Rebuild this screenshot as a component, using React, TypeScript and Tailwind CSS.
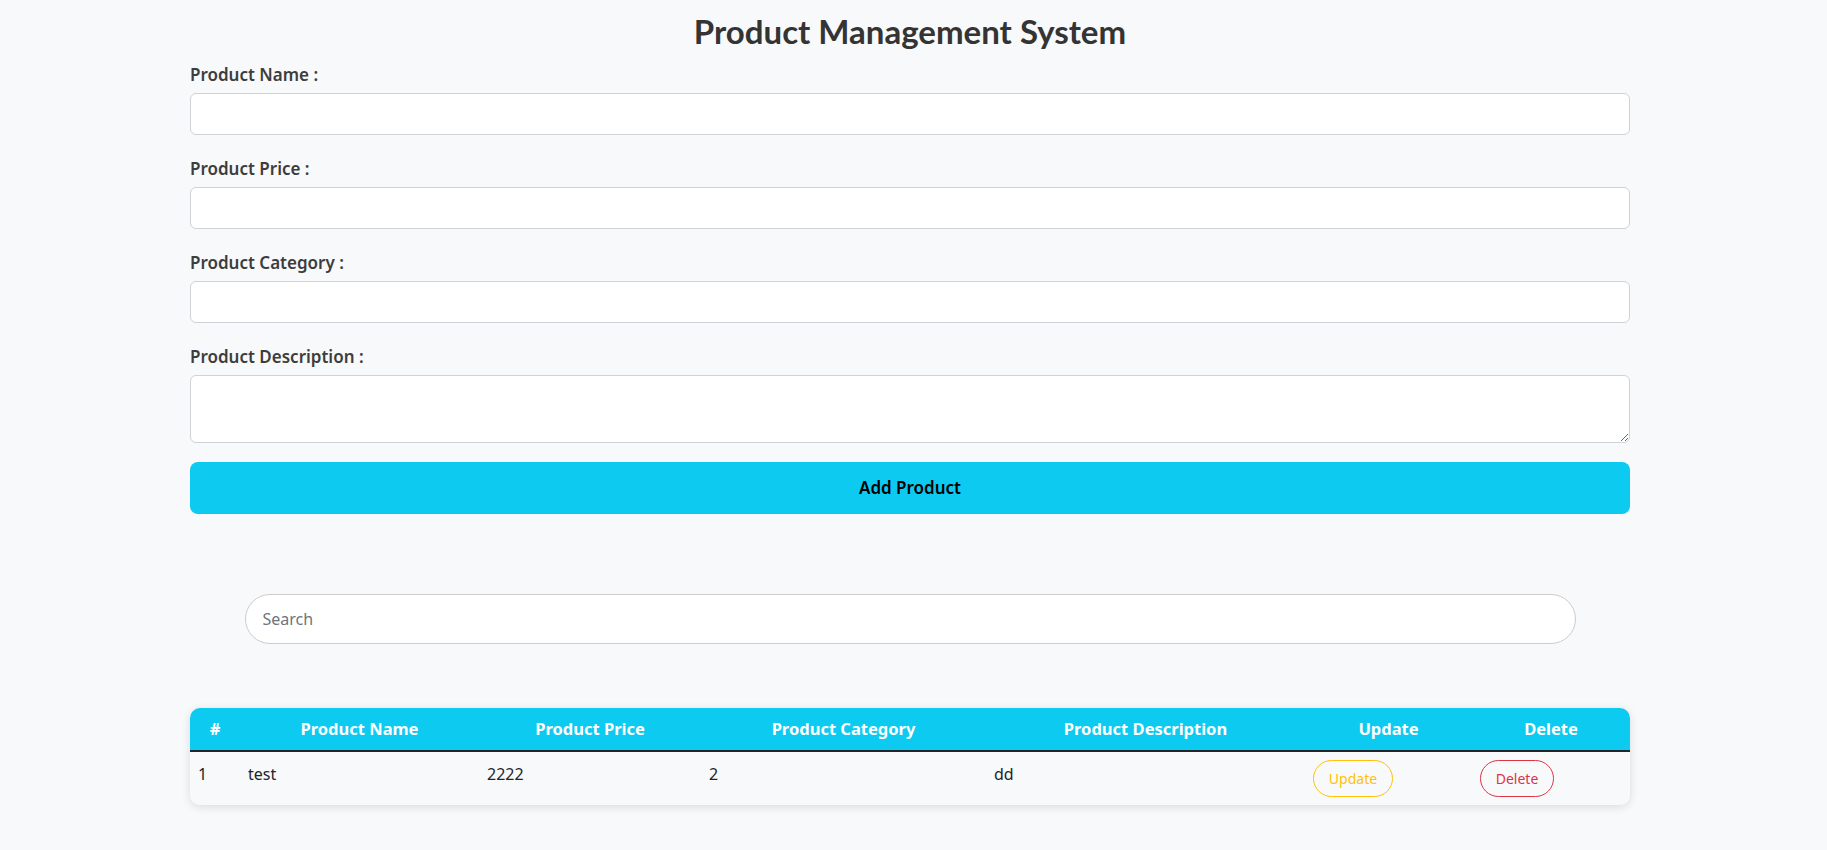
import React, { useState } from "react";

type Product = {
    name: string;
    price: string;
    category: string;
    description: string;
};

const font = { fontFamily: '"Noto Sans", "Open Sans", sans-serif' };
const titleFont = { fontFamily: 'Lato, "Noto Sans", sans-serif' };

export default function App() {
    const [products] = useState<Product[]>([
        { name: "test", price: "2222", category: "2", description: "dd" },
    ]);

    return (
        <div className="min-h-[850px] bg-[#f8f9fa] text-[#212529]" style={font}>
            <div className="ml-[190px] w-[1440px] pt-[12px]">
                <h2 className="text-center text-[33px] font-bold leading-[1.2] text-[#343434]" style={titleFont}>
                    Product Management System
                </h2>

                <form className="mt-[11px]" onSubmit={(e) => e.preventDefault()}>
                    <div>
                        <label htmlFor="name" className="block text-[17px] font-semibold leading-6 text-[#3d3d3d]">
                            Product Name :
                        </label>
                        <input
                            id="name"
                            type="text"
                            className="mt-[6px] block h-[42px] w-full rounded-[6px] border border-[#cfd2d6] bg-white px-3 outline-none"
                        />
                    </div>

                    <div className="mt-[22px]">
                        <label htmlFor="price" className="block text-[17px] font-semibold leading-6 text-[#3d3d3d]">
                            Product Price :
                        </label>
                        <input
                            id="price"
                            type="number"
                            className="mt-[6px] block h-[42px] w-full rounded-[6px] border border-[#cfd2d6] bg-white px-3 outline-none"
                        />
                    </div>

                    <div className="mt-[22px]">
                        <label htmlFor="category" className="block text-[17px] font-semibold leading-6 text-[#3d3d3d]">
                            Product Category :
                        </label>
                        <input
                            id="category"
                            type="text"
                            className="mt-[6px] block h-[42px] w-full rounded-[6px] border border-[#cfd2d6] bg-white px-3 outline-none"
                        />
                    </div>

                    <div className="mt-[22px]">
                        <label htmlFor="description" className="block text-[17px] font-semibold leading-6 text-[#3d3d3d]">
                            Product Description :
                        </label>
                        <textarea
                            id="description"
                            className="mt-[6px] block h-[68px] w-full rounded-[6px] border border-[#cfd2d6] bg-white px-3 py-1.5 outline-none"
                        />
                    </div>

                    <button
                        type="submit"
                        className="mt-[19px] h-[52px] w-full rounded-[8px] bg-[#0dcaf0] text-[17px] font-semibold text-black"
                    >
                        Add Product
                    </button>
                </form>

                <div className="mt-[80px] flex justify-center">
                    <input
                        type="text"
                        placeholder="Search"
                        className="h-[50px] w-[1331px] rounded-full border border-[#cccccc] bg-white px-[17px] text-[16px] outline-none placeholder:text-[#6c757d]"
                    />
                </div>

                <div className="mt-[64px] overflow-hidden rounded-[10px] shadow-[0_2px_10px_rgba(0,0,0,0.12)]">
                    <table className="w-full table-fixed border-collapse align-top">
                        <colgroup>
                            <col className="w-[50px]" />
                            <col className="w-[239px]" />
                            <col className="w-[222px]" />
                            <col className="w-[285px]" />
                            <col className="w-[319px]" />
                            <col className="w-[167px]" />
                            <col className="w-[158px]" />
                        </colgroup>
                        <thead className="bg-[#0dcaf0] text-white">
                            <tr className="border-b-2 border-[#212529]">
                                <th className="px-2 py-[9px] text-center text-[16.5px] font-bold leading-6">#</th>
                                <th className="px-2 py-[9px] text-center text-[16.5px] font-bold leading-6">Product Name</th>
                                <th className="px-2 py-[9px] text-center text-[16.5px] font-bold leading-6">Product Price</th>
                                <th className="px-2 py-[9px] text-center text-[16.5px] font-bold leading-6">Product Category</th>
                                <th className="px-2 py-[9px] text-center text-[16.5px] font-bold leading-6">Product Description</th>
                                <th className="px-2 py-[9px] text-center text-[16.5px] font-bold leading-6">Update</th>
                                <th className="px-2 py-[9px] text-center text-[16.5px] font-bold leading-6">Delete</th>
                            </tr>
                        </thead>
                        <tbody className="bg-[#f8f9fa]">
                            {products.map((p, i) => (
                                <tr key={i} className="align-top">
                                    <td className="px-2 pt-[10px] pb-2 text-[16px] leading-6">{i + 1}</td>
                                    <td className="px-2 pt-[10px] pb-2 text-[16px] leading-6">{p.name}</td>
                                    <td className="px-2 pt-[10px] pb-2 text-[16px] leading-6">{p.price}</td>
                                    <td className="px-2 pt-[10px] pb-2 text-[16px] leading-6">{p.category}</td>
                                    <td className="px-2 pt-[10px] pb-2 text-[16px] leading-6">{p.description}</td>
                                    <td className="px-2 pt-[8px] pb-2">
                                        <button className="h-[37px] w-[80px] rounded-full border border-[#ffc107] text-[14px] text-[#ffc107]">
                                            Update
                                        </button>
                                    </td>
                                    <td className="px-2 pt-[8px] pb-2">
                                        <button className="h-[37px] w-[74px] rounded-full border border-[#dc3545] text-[14px] text-[#dc3545]">
                                            Delete
                                        </button>
                                    </td>
                                </tr>
                            ))}
                        </tbody>
                    </table>
                </div>
            </div>
        </div>
    );
}
